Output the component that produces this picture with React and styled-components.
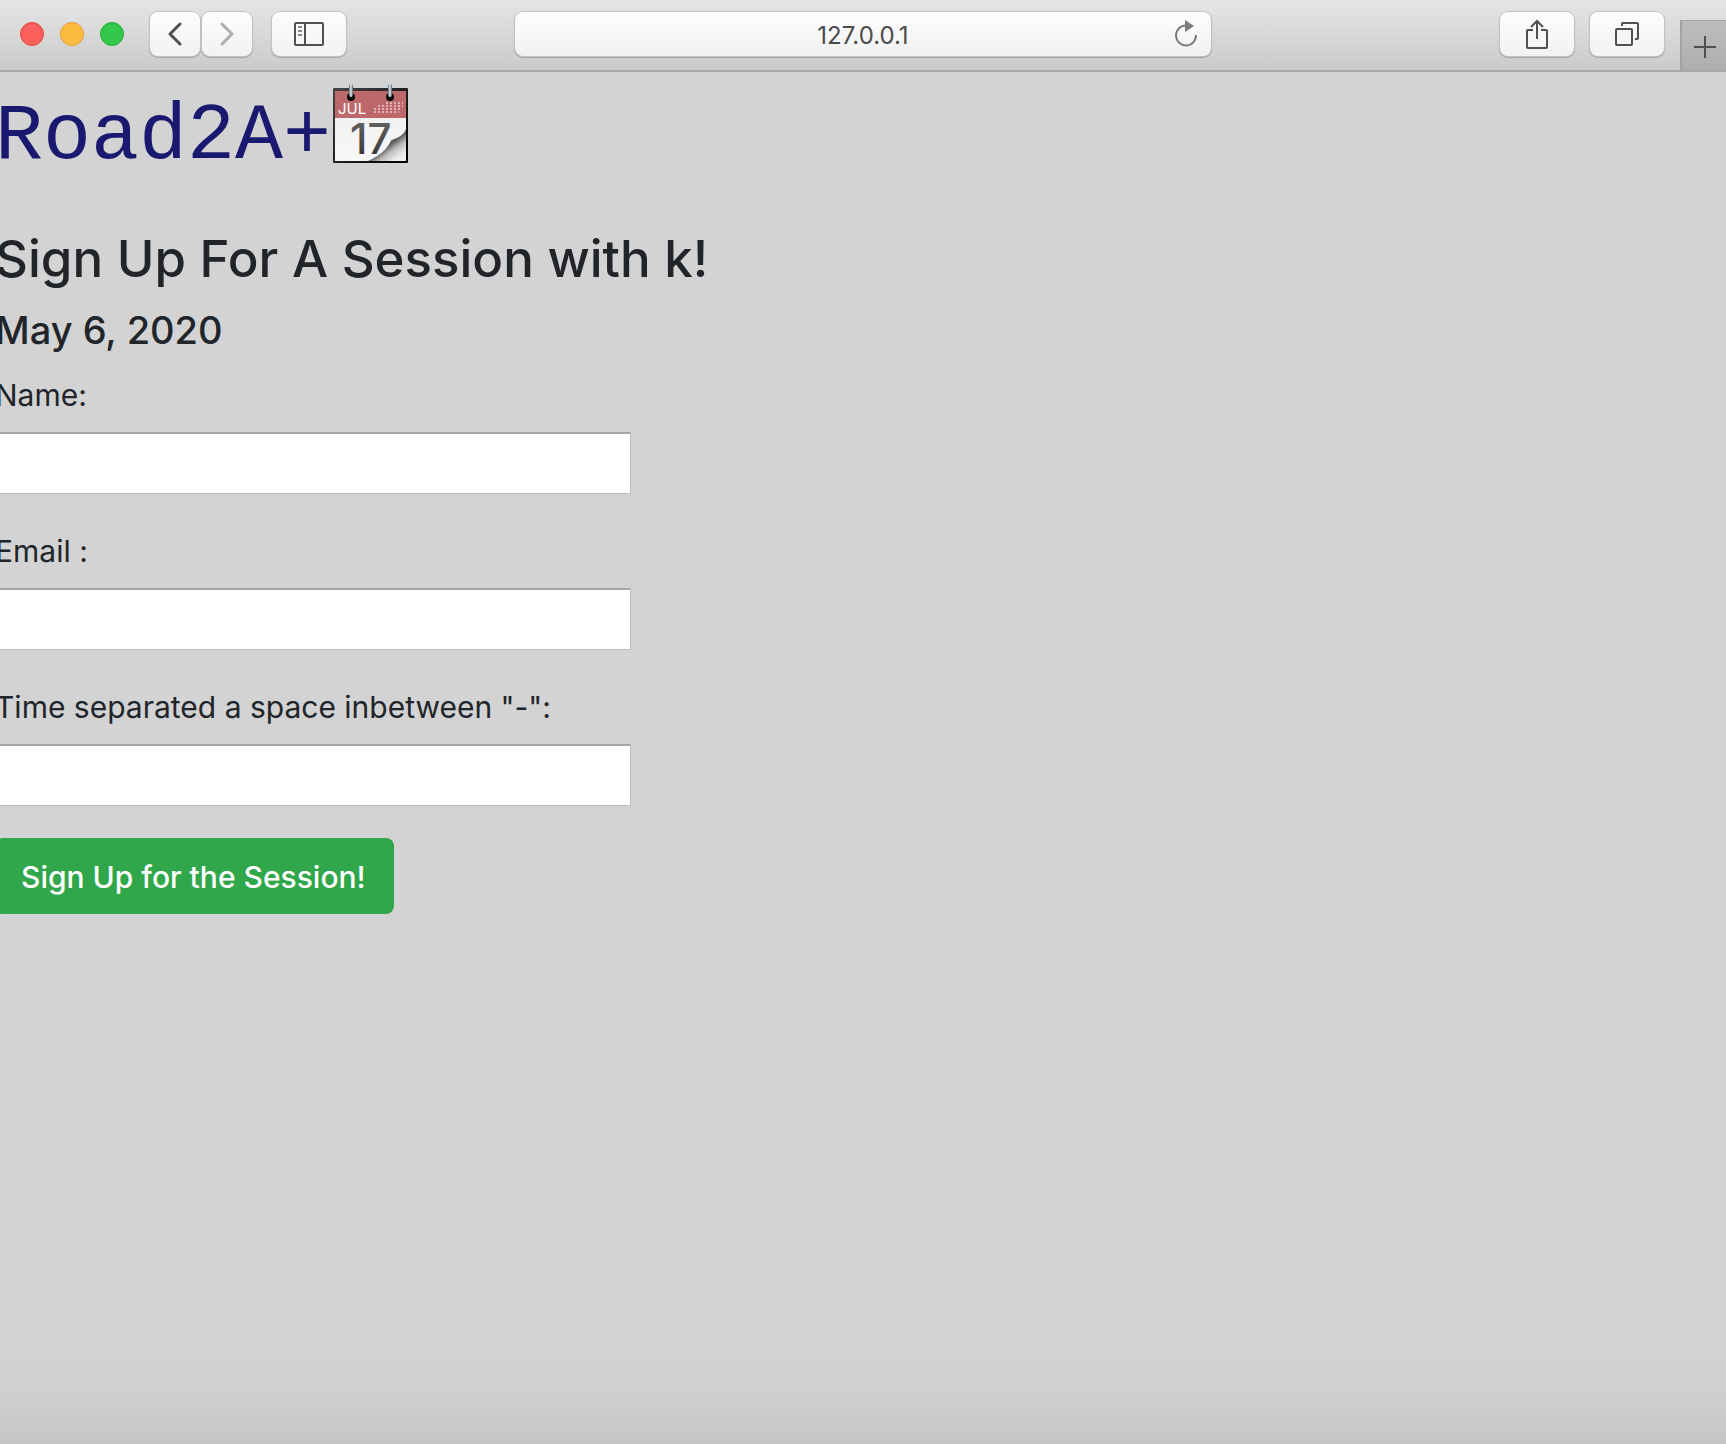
import React from "react";
import styled, { createGlobalStyle } from "styled-components";

const GlobalStyle = createGlobalStyle`
  *, *::before, *::after { box-sizing: border-box; }
  body {
    margin: 0;
    background: #d3d3d3;
    color: #212529;
    font-family: Inter, "Liberation Sans", sans-serif;
  }
`;

const Window = styled.div`
  display: flex;
  flex-direction: column;
  min-height: 100vh;
  overflow: hidden;
  background: linear-gradient(to top, #c5c5c5 0, #cfcfcf 44px, #d3d3d3 100px);
`;

const Toolbar = styled.header`
  display: grid;
  grid-template-columns: 1fr minmax(0, 698px) 1fr;
  align-items: center;
  height: 72px;
  background: linear-gradient(#e5e5e5, #cbcbcb);
  border-bottom: 2px solid #a9a9a9;
`;

const ToolGroup = styled.div`
  display: flex;
  align-items: center;
  align-self: stretch;
  justify-content: ${(p) => (p.$end ? "flex-end" : "flex-start")};
  gap: 16px;
  padding-left: ${(p) => (p.$end ? 0 : 20)}px;
  padding-bottom: 2px;
`;

const Lights = styled.div`
  display: flex;
  gap: 16px;
  margin-right: 10px;
`;

const Light = styled.button`
  width: 24px;
  height: 24px;
  padding: 0;
  border-radius: 50%;
  border: 1px solid ${(p) => p.$edge};
  background: ${(p) => p.$color};
`;

const NavPair = styled.div`
  display: flex;
  gap: 2px;
  margin-right: 4px;
`;

const ToolButton = styled.button`
  display: flex;
  align-items: center;
  justify-content: center;
  width: ${(p) => (p.$narrow ? 50 : 74)}px;
  height: 44px;
  padding: 0;
  border: 0;
  border-radius: 8px;
  background: linear-gradient(#fdfdfd, #f2f2f2);
  box-shadow: 0 0 0 1px #c2c2c2, 0 1px 1px 1px #a4a4a4;
`;

const AddressBar = styled.div`
  display: flex;
  align-items: center;
  height: 44px;
  margin: 0 1px 2px;
  padding: 0 12px 0 38px;
  border-radius: 8px;
  background: linear-gradient(#fdfdfd, #f1f1f1);
  box-shadow: 0 0 0 1px #c2c2c2, 0 1px 1px 1px #a0a0a0;
`;

const Address = styled.input`
  flex: 1;
  min-width: 0;
  padding: 4px 0 0;
  border: 0;
  outline: 0;
  background: transparent;
  color: #4b4b4b;
  font: 400 24px/32px Inter, "Liberation Sans", sans-serif;
  text-align: center;
`;

const ReloadButton = styled.button`
  display: flex;
  padding: 0;
  border: 0;
  background: transparent;
`;

const NewTab = styled.button`
  display: flex;
  align-items: center;
  justify-content: center;
  align-self: flex-end;
  width: 46px;
  height: 50px;
  margin-bottom: -2px;
  padding: 2px 0 0 2px;
  border: 0;
  border-top: 1px solid #a6a6a6;
  border-left: 2px solid #a3a3a3;
  background: linear-gradient(#bdbdbd, #afafaf);
`;

const Page = styled.main`
  margin-left: -5px;
`;

const Brand = styled.h1`
  display: flex;
  align-items: flex-start;
  gap: 2px;
  height: 112px;
  margin: 0 0 42px;
  padding-top: 12px;
  color: #191970;
  font: 400 80px/106px "Liberation Mono", monospace;
`;

const CalendarArt = styled.svg`
  flex: none;
`;

const Heading = styled.h2`
  margin: 0 0 14px;
  font-size: 51px;
  font-weight: 500;
  line-height: 66px;
`;

const Day = styled.h3`
  margin: 0 0 16px;
  font-size: 38px;
  font-weight: 500;
  line-height: 48px;
`;

const Form = styled.form`
  display: flex;
  flex-direction: column;
  align-items: flex-start;
  gap: 32px;
`;

const Field = styled.div`
  display: flex;
  flex-direction: column;
  gap: 12px;
  width: 636px;
  max-width: 100%;
`;

const Label = styled.label`
  font-size: 30px;
  line-height: 50px;
`;

const TextBox = styled.input`
  width: 100%;
  height: 62px;
  padding: 4px 8px;
  border: 1px solid #bdbdbd;
  border-top: 2px solid #a6a6a6;
  border-radius: 0;
  background: #fff;
  font: 400 30px/48px Inter, "Liberation Sans", sans-serif;
`;

const Submit = styled.button`
  height: 76px;
  padding: 2px 28px 0 26px;
  border: 0;
  border-radius: 8px;
  background: #30a74a;
  color: #fff;
  font: 500 30px/48px Inter, "Liberation Sans", sans-serif;
`;

const Chevron = ({ flip, color }) => (
  <svg width="16" height="26" viewBox="0 0 16 26" fill="none" stroke={color} strokeWidth="3" strokeLinecap="round" strokeLinejoin="round">
    <path d={flip ? "M3 3 13 13 3 23" : "M13 3 3 13 13 23"} />
  </svg>
);

const SidebarIcon = () => (
  <svg width="30" height="24" viewBox="0 0 30 24" fill="none" stroke="#505050" strokeWidth="2">
    <rect x="1" y="1" width="28" height="22" rx="1" />
    <path d="M11 1V23" />
    <path d="M4 5H8M4 9H8M4 13H8" stroke="#888" />
  </svg>
);

const ReloadIcon = () => (
  <svg width="26" height="28" viewBox="0 0 26 28">
    <path d="M12 5.5A10 10 0 1 0 23 15" fill="none" stroke="#7b7b7b" strokeWidth="2" />
    <path d="M12 0V12L21 6Z" fill="#7b7b7b" />
  </svg>
);

const ShareIcon = () => (
  <svg width="24" height="32" viewBox="0 0 24 32" fill="none" stroke="#505050" strokeWidth="2">
    <path d="M8 12H3Q2 12 2 13V29Q2 30 3 30H21Q22 30 22 29V13Q22 12 21 12H16" />
    <path d="M12 21V3M6 9 12 3 18 9" />
  </svg>
);

const TabsIcon = () => (
  <svg width="24" height="24" viewBox="0 0 24 24" fill="none" stroke="#505050" strokeWidth="2">
    <rect x="1" y="7" width="16" height="16" rx="1" />
    <path d="M7 4V2Q7 1 8 1H22Q23 1 23 2V16Q23 17 22 17H20" />
  </svg>
);

const PlusIcon = () => (
  <svg width="22" height="22" viewBox="0 0 22 22" stroke="#505050" strokeWidth="2">
    <path d="M0 11H22M11 0V22" />
  </svg>
);

const CalendarIcon = () => (
  <CalendarArt width="76" height="80" viewBox="0 0 76 80" role="img" aria-label="July 17">
    <defs>
      <linearGradient id="frame" x1="0" y1="0" x2="1" y2="1">
        <stop offset="0" stopColor="#454545" />
        <stop offset="0.5" stopColor="#202020" />
        <stop offset="1" stopColor="#000" />
      </linearGradient>
      <linearGradient id="paper" x1="0" y1="0" x2="0" y2="1">
        <stop offset="0" stopColor="#eee" />
        <stop offset="1" stopColor="#f8f8f8" />
      </linearGradient>
      <linearGradient id="digits" x1="0" y1="0" x2="0" y2="1">
        <stop offset="0" stopColor="#6a6a6a" />
        <stop offset="1" stopColor="#303030" />
      </linearGradient>
      <linearGradient id="curl" gradientUnits="userSpaceOnUse" x1="49" y1="52" x2="67" y2="76">
        <stop offset="0" stopColor="#fff" />
        <stop offset="0.22" stopColor="#eee" />
        <stop offset="0.36" stopColor="#555" />
        <stop offset="0.6" stopColor="#bbb" />
        <stop offset="0.9" stopColor="#eee" />
      </linearGradient>
      <linearGradient id="ring">
        <stop offset="0" stopColor="#526273" />
        <stop offset="0.5" stopColor="#e8f0f5" />
        <stop offset="1" stopColor="#445260" />
      </linearGradient>
    </defs>
    <rect x="0" y="4" width="75" height="75" rx="1" fill="url(#frame)" />
    <rect x="2" y="7" width="71" height="70" fill="url(#paper)" />
    <rect x="2" y="7" width="71" height="27" fill="#bd696b" />
    <text x="5" y="30" fill="#fff" fontFamily="Inter, sans-serif" fontSize="15">JUL</text>
    <path d="M53 19H70M45 22H70M41 25H69M41 28H66" stroke="#dfb3b4" strokeWidth="2" strokeDasharray="2 2" />
    <text x="17" y="70" fill="url(#digits)" fontFamily="Inter, sans-serif" fontSize="42" fontWeight="500">17</text>
    <path d="M73 45Q70 53 58 56Q54 68 35 77H73Z" fill="url(#curl)" />
    {[18, 57].map((x) => (
      <g key={x}>
        <circle cx={x} cy="13" r="4" fill="#080808" />
        <rect x={x - 2} y="0" width="4" height="13" rx="2" fill="url(#ring)" />
      </g>
    ))}
  </CalendarArt>
);

const fields = [
  { id: "name", label: "Name:", type: "text" },
  { id: "email", label: "Email :", type: "email" },
  { id: "time", label: 'Time separated a space inbetween "-":', type: "text" },
];

export default function App() {
  return (
    <Window>
      <GlobalStyle />
      <Toolbar>
        <ToolGroup>
          <Lights>
            <Light aria-label="Close" $color="#fc605c" $edge="#df4744" />
            <Light aria-label="Minimize" $color="#fdbc40" $edge="#de9f34" />
            <Light aria-label="Full screen" $color="#34c84a" $edge="#27aa35" />
          </Lights>
          <NavPair>
            <ToolButton $narrow aria-label="Back"><Chevron color="#505050" /></ToolButton>
            <ToolButton $narrow aria-label="Forward"><Chevron flip color="#adadad" /></ToolButton>
          </NavPair>
          <ToolButton aria-label="Sidebar"><SidebarIcon /></ToolButton>
        </ToolGroup>
        <AddressBar>
          <Address aria-label="Address" defaultValue="127.0.0.1" />
          <ReloadButton aria-label="Reload"><ReloadIcon /></ReloadButton>
        </AddressBar>
        <ToolGroup $end>
          <ToolButton aria-label="Share"><ShareIcon /></ToolButton>
          <ToolButton aria-label="Tabs"><TabsIcon /></ToolButton>
          <NewTab aria-label="New tab"><PlusIcon /></NewTab>
        </ToolGroup>
      </Toolbar>
      <Page>
        <Brand>Road2A+<CalendarIcon /></Brand>
        <Heading>Sign Up For A Session with k!</Heading>
        <Day>May 6, 2020</Day>
        <Form onSubmit={(event) => event.preventDefault()}>
          {fields.map((field) => (
            <Field key={field.id}>
              <Label htmlFor={field.id}>{field.label}</Label>
              <TextBox id={field.id} name={field.id} type={field.type} />
            </Field>
          ))}
          <Submit type="submit">Sign Up for the Session!</Submit>
        </Form>
      </Page>
    </Window>
  );
}
